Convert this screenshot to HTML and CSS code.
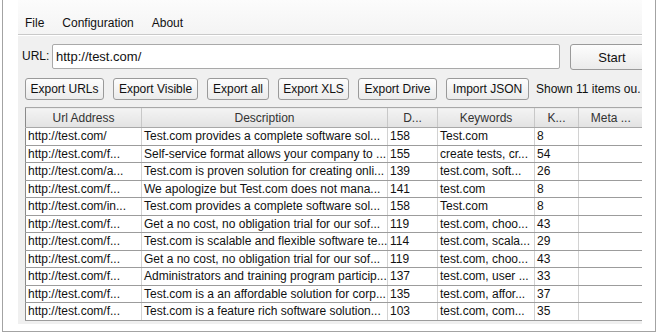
FILE: index.html
```html
<!DOCTYPE html>
<html lang="en">
<head>
  <meta charset="UTF-8">
  <title>Site Crawler</title>
  <link rel="stylesheet" href="styles.css">
</head>
<body>
  <div class="frame">
    <div class="app">
      <!-- Menu -->
      <div class="menubar">
        <span class="menu-item">File</span>
        <span class="menu-item">Configuration</span>
        <span class="menu-item">About</span>
      </div>

      <!-- URL row -->
      <div class="url-row">
        <label class="url-label">URL:</label>
        <div class="url-input">http://test.com/</div>
        <button class="btn start-btn">Start</button>
      </div>

      <!-- Export buttons -->
      <div class="tool-row">
        <button class="btn w-urls">Export URLs</button>
        <button class="btn w-visible">Export Visible</button>
        <button class="btn w-all">Export all</button>
        <button class="btn w-xls">Export XLS</button>
        <button class="btn w-drive">Export Drive</button>
        <button class="btn w-json">Import JSON</button>
        <span class="shown">Shown 11 items ou.</span>
      </div>

      <!-- Results -->
      <div class="grid-wrap">
        <table class="grid">
          <colgroup>
            <col class="c-url">
            <col class="c-desc">
            <col class="c-d">
            <col class="c-kw">
            <col class="c-k">
            <col class="c-meta">
          </colgroup>
          <thead>
            <tr>
              <th>Url Address</th>
              <th>Description</th>
              <th>D...</th>
              <th>Keywords</th>
              <th>K...</th>
              <th>Meta ...</th>
            </tr>
          </thead>
          <tbody>
            <tr><td>http://test.com/</td><td>Test.com provides a complete software sol...</td><td>158</td><td>Test.com</td><td>8</td><td></td></tr>
            <tr><td>http://test.com/f...</td><td>Self-service format allows your company to ...</td><td>155</td><td>create tests, cr...</td><td>54</td><td></td></tr>
            <tr><td>http://test.com/a...</td><td>Test.com is proven solution for creating onli...</td><td>139</td><td>test.com, soft...</td><td>26</td><td></td></tr>
            <tr><td>http://test.com/f...</td><td>We apologize but Test.com does not mana...</td><td>141</td><td>test.com</td><td>8</td><td></td></tr>
            <tr><td>http://test.com/in...</td><td>Test.com provides a complete software sol...</td><td>158</td><td>Test.com</td><td>8</td><td></td></tr>
            <tr><td>http://test.com/f...</td><td>Get a no cost, no obligation trial for our sof...</td><td>119</td><td>test.com, choo...</td><td>43</td><td></td></tr>
            <tr><td>http://test.com/f...</td><td>Test.com is scalable and flexible software te...</td><td>114</td><td>test.com, scala...</td><td>29</td><td></td></tr>
            <tr><td>http://test.com/f...</td><td>Get a no cost, no obligation trial for our sof...</td><td>119</td><td>test.com, choo...</td><td>43</td><td></td></tr>
            <tr><td>http://test.com/f...</td><td>Administrators and training program particip...</td><td>137</td><td>test.com, user ...</td><td>33</td><td></td></tr>
            <tr><td>http://test.com/f...</td><td>Test.com is a an affordable solution for corp...</td><td>135</td><td>test.com, affor...</td><td>37</td><td></td></tr>
            <tr><td>http://test.com/f...</td><td>Test.com is a feature rich software solution...</td><td>103</td><td>test.com, com...</td><td>35</td><td></td></tr>
          </tbody>
        </table>
      </div>
    </div>
  </div>
</body>
</html>
```

FILE: styles.css
```css
* {
  margin: 0;
  padding: 0;
  box-sizing: border-box;
  font-family: "Liberation Sans", Arial, sans-serif;
}
body {
  background: #fff;
  color: #111;
  font-size: 12px;
}
.frame {
  margin-left: 2px;
  width: 654px;
  height: 332px;
  border: 1px solid #a3a3a3;
  border-top: none;
  background: #fff;
}
.app {
  margin-left: 15px;
  width: 624px;
  height: 324px;
  overflow: hidden;
  background: #f0f0f0;
}
.menubar {
  display: flex;
  height: 35px;
  padding: 15px 0 0 7px;
  background: linear-gradient(#fcfcfc, #f4f4f4);
  border-bottom: 1px solid #c9c9c9;
  box-shadow: 0 1px 0 #fff;
}
.menu-item {
  line-height: 16px;
  margin-right: 18px;
}
.url-row {
  display: flex;
  align-items: flex-start;
  margin-top: 9px;
  padding-left: 4px;
  height: 26px;
}
.url-label {
  flex-shrink: 0;
  line-height: 25px;
  width: 30px;
}
.url-input {
  flex-shrink: 0;
  width: 508px;
  height: 25px;
  line-height: 23px;
  padding-left: 3px;
  font-size: 13px;
  background: #fff;
  border: 1px solid #a9a9a9;
  border-radius: 2px;
}
.btn {
  font-size: 12px;
  color: #111;
  border: 1px solid #9a9a9a;
  border-radius: 3px;
  background: linear-gradient(#fdfdfd, #ebebeb);
  height: 22px;
  flex-shrink: 0;
}
.start-btn {
  margin-left: 10px;
  width: 84px;
  height: 26px;
  font-size: 13px;
}
.tool-row {
  display: flex;
  align-items: center;
  gap: 9px;
  margin-top: 8px;
  padding-left: 7px;
  white-space: nowrap;
}
.w-urls { width: 79px; }
.w-visible { width: 85px; }
.w-all { width: 62px; }
.w-xls { width: 71px; }
.w-drive { width: 79px; }
.w-json { width: 83px; }
.shown {
  margin-left: -2px;
}
.grid-wrap {
  margin-top: 7px;
  margin-left: 7px;
  width: 617px;
}
.grid {
  table-layout: fixed;
  border-collapse: collapse;
  width: 617px;
  background: #fff;
}
.c-url { width: 116px; }
.c-desc { width: 246px; }
.c-d { width: 50px; }
.c-kw { width: 97px; }
.c-k { width: 44px; }
.c-meta { width: 64px; }
.grid th {
  height: 20px;
  font-weight: normal;
  color: #333;
  background: linear-gradient(#f4f4f4, #e2e2e2);
  border: 1px solid #a8a8a8;
  border-left-color: #c8c8c8;
  border-right: none;
  text-align: center;
}
.grid th:first-child {
  border-left-color: #8a8a8a;
}
.grid td {
  height: 17.5px;
  padding: 0 2px;
  white-space: nowrap;
  overflow: hidden;
  border-top: 1px solid #9c9c9c;
  border-bottom: 1px solid #9c9c9c;
  border-left: 1px solid #d2d2d2;
  font-size: 12px;
}
.grid td:first-child {
  border-left-color: #8a8a8a;
}
```
